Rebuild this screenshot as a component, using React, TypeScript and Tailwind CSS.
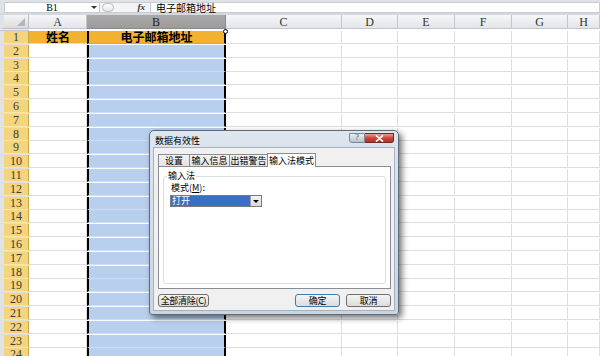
import React from "react";

const COLS = ["A", "B", "C", "D", "E", "F", "G", "H"];
const ROWS = Array.from({ length: 24 }, (_, i) => i + 1);

const cjk = { fontFamily: '"Noto Sans CJK SC", "Noto Sans", sans-serif' };
const serif = { fontFamily: '"Liberation Serif", "DejaVu Serif", serif' };

function HeaderRow() {
  return (
    <div className="grid grid-cols-[29px_58px_139px_116px_56px_57px_57px_56px_1fr] h-[16px]">
      <div className="relative bg-gradient-to-b from-[#f4f4f4] to-[#dcdcdc] border-r border-b border-[#b9bdc3] border-l-4 border-l-[#dfe2e6]">
        <div className="absolute right-[3px] bottom-[2px] w-0 h-0 border-l-[8px] border-l-transparent border-b-[8px] border-b-[#b5b5b5]" />
      </div>
      {COLS.map((c) => (
        <div
          key={c}
          style={serif}
          className={
            c === "B"
              ? "flex items-center justify-center bg-gradient-to-b from-[#a9a9a9] to-[#9c9c9c] border-r border-b border-[#8a8a8a] text-[12px] leading-none text-[#222]"
              : "flex items-center justify-center bg-gradient-to-b from-[#f6f7f9] to-[#e2e5e9] border-r border-b border-[#c3c7cc] text-[12px] leading-none text-[#333]"
          }
        >
          {c}
        </div>
      ))}
      <div className="bg-gradient-to-b from-[#f6f7f9] to-[#e2e5e9] border-b border-[#c3c7cc]" />
    </div>
  );
}

function DataRow({ n }: { n: number }) {
  const first = n === 1;
  return (
    <div className="grid grid-cols-[29px_58px_139px_116px_56px_57px_57px_56px_1fr] h-[13.8px]">
      <div
        style={serif}
        className="flex items-center justify-center bg-[#f5d47e] border-r border-[#c9a546] border-b border-b-[#fbe6a6] border-l-4 border-l-[#dfe2e6] text-[12px] leading-[12px] text-[#3a3a3a]"
      >
        {n}
      </div>
      <div
        style={cjk}
        className={
          first
            ? "flex items-center justify-center bg-[#f2b12e] border-b border-[#d9d9d9] text-[12px] font-bold leading-[12px] text-black"
            : "bg-white border-r border-b border-[#dedede]"
        }
      >
        {first ? "姓名" : null}
      </div>
      <div
        style={cjk}
        className={
          first
            ? "flex items-center justify-center bg-[#f2b12e] border-l-2 border-r-2 border-black border-b border-b-[#e0a52a] text-[12px] font-bold leading-[12px] text-black"
            : "bg-[#b8d0ee] border-l-2 border-r-2 border-black border-b border-b-[#cddef3]"
        }
      >
        {first ? "电子邮箱地址" : null}
      </div>
      {COLS.slice(2).map((c) => (
        <div key={c} className="relative bg-white border-r border-b border-[#dedede]">
          {first && c === "C" ? (
            <div className="absolute -left-[3px] -top-[2px] w-[5px] h-[5px] rounded-full bg-white border border-black" />
          ) : null}
        </div>
      ))}
      <div className="bg-white border-b border-[#dedede]" />
    </div>
  );
}

function TitleButtons() {
  return (
    <div className="flex items-start mt-[2px]">
      <div
        className="w-[16px] h-[10px] rounded-bl-[3px] border border-[#7d8794] bg-gradient-to-b from-[#e9eef3] to-[#b9c3cf] flex items-center justify-center text-[8px] leading-none text-[#3a4a5a]"
        style={serif}
      >
        ?
      </div>
      <div className="w-[29px] h-[10px] rounded-br-[3px] border border-[#6b2a25] border-l-0 bg-gradient-to-b from-[#e8a093] via-[#c9463a] to-[#b73226] flex items-center justify-center">
        <svg width="9" height="7" viewBox="0 0 9 7">
          <path d="M1.5 0.8 L7.5 6.2 M7.5 0.8 L1.5 6.2" stroke="white" strokeWidth="1.6" strokeLinecap="round" />
        </svg>
      </div>
    </div>
  );
}

function Btn({ label, def, w }: { label: string; def?: boolean; w: string }) {
  return (
    <div
      style={cjk}
      className={
        (def ? "border-[#3c7fb1] " : "border-[#707070] ") +
        w +
        " h-[13px] rounded-[3px] border bg-gradient-to-b from-[#f4f4f4] to-[#dcdcdc] flex items-center justify-center whitespace-nowrap text-[9px] tracking-[-0.3px] leading-none text-black"
      }
    >
      {label}
    </div>
  );
}

function Dialog() {
  return (
    <div className="absolute left-[149px] top-[130px] w-[250px] h-[185px] rounded-t-[5px] rounded-b-[3px] border border-[#5f6b78] bg-gradient-to-b from-[#dde6ef] to-[#cad5e1] shadow-[3px_3px_6px_rgba(0,0,0,0.55)] flex flex-col">
      <div className="h-[16px] flex items-start justify-between pl-[5px] pr-[4px]">
        <div style={cjk} className="text-[9px] leading-none text-black mt-[5px] whitespace-nowrap">
          数据有效性
        </div>
        <TitleButtons />
      </div>
      <div className="flex-1 mx-[3px] mb-[3px] bg-[#f0f0f0] border border-[#a5b1be] flex flex-col pl-[4px] pr-[3px] pt-[4px]">
        <div className="flex items-end h-[14px]">
          {[
            ["设置", "w-[31px]"],
            ["输入信息", "w-[40px]"],
            ["出错警告", "w-[38px]"],
          ].map(([t, w]) => (
            <div
              key={t}
              style={cjk}
              className={
                w +
                " h-[12px] border border-b-0 border-r-0 border-[#898c95] bg-gradient-to-b from-[#f3f3f3] to-[#e3e3e3] flex items-center justify-center whitespace-nowrap text-[9px] leading-none text-black"
              }
            >
              {t}
            </div>
          ))}
          <div
            style={cjk}
            className="w-[49px] h-[14px] border border-b-0 border-[#898c95] bg-white flex items-center justify-center whitespace-nowrap text-[9px] leading-none text-black -mb-[1px] relative z-10"
          >
            输入法模式
          </div>
        </div>
        <div className="h-[123px] border border-[#898c95] bg-white px-[4px] pt-[9px] pb-[4px]">
          <div className="relative h-full border border-[#d5dfe5] rounded-[3px] pl-[6px] pt-[6px]">
            <div
              style={cjk}
              className="absolute left-[3px] -top-[6px] bg-white px-[1px] text-[9px] leading-[9px] text-black whitespace-nowrap"
            >
              输入法
            </div>
            <div style={cjk} className="text-[9px] leading-[9px] text-black ml-[1px] whitespace-nowrap">
              模式(<span className="underline">M</span>):
            </div>
            <div className="mt-[3px] w-[92px] h-[12px] border border-[#7a7a7a] bg-white flex">
              <div style={cjk} className="flex-1 bg-[#3a6fc4] text-white text-[9px] leading-[10px] pl-[1px]">
                打开
              </div>
              <div className="w-[11px] h-full border-l border-[#a0a0a0] bg-gradient-to-b from-[#f4f4f4] to-[#d9d9d9] flex items-center justify-center">
                <div className="w-0 h-0 border-l-[3px] border-r-[3px] border-t-[3px] border-l-transparent border-r-transparent border-t-black" />
              </div>
            </div>
          </div>
        </div>
        <div className="flex items-center mt-[5px]">
          <Btn label="全部清除(C)" w="w-[51px]" />
          <div className="flex-1" />
          <Btn label="确定" def w="w-[45px]" />
          <div className="w-[6px]" />
          <Btn label="取消" w="w-[45px]" />
        </div>
      </div>
    </div>
  );
}

export default function App() {
  return (
    <div className="relative w-[600px] h-[356px] overflow-hidden bg-white">
      <div className="h-[2px] bg-[#dfe3e8]" />
      <div className="h-[11px] flex bg-white">
        <div className="w-[4px] bg-[#dfe3e8]" />
        <div className="w-[96px] relative flex items-center justify-center border border-[#c9cdd2] bg-white">
          <span style={serif} className="text-[10px] leading-none text-black">
            B1
          </span>
          <div className="absolute right-[2px] top-[3px] w-0 h-0 border-l-[3px] border-r-[3px] border-t-[3px] border-l-transparent border-r-transparent border-t-[#333]" />
        </div>
        <div className="w-[50px] flex items-center bg-[#f2f4f6] border-y border-[#c9cdd2]">
          <div className="ml-[2px] w-[12px] h-[9px] rounded-full border border-[#b8bcc2] bg-gradient-to-b from-white to-[#e4e6ea]" />
          <div className="flex-1" />
          <span style={serif} className="mr-[5px] text-[9px] italic font-bold leading-none text-[#333]">
            fx
          </span>
        </div>
        <div className="flex-1 flex items-center border border-[#c9cdd2] bg-white pl-[5px]">
          <span style={cjk} className="text-[10px] leading-none text-black">
            电子邮箱地址
          </span>
        </div>
      </div>
      <div className="h-[2px] bg-[#d5d9de]" />
      <HeaderRow />
      {ROWS.map((n) => (
        <DataRow key={n} n={n} />
      ))}
      <Dialog />
    </div>
  );
}
